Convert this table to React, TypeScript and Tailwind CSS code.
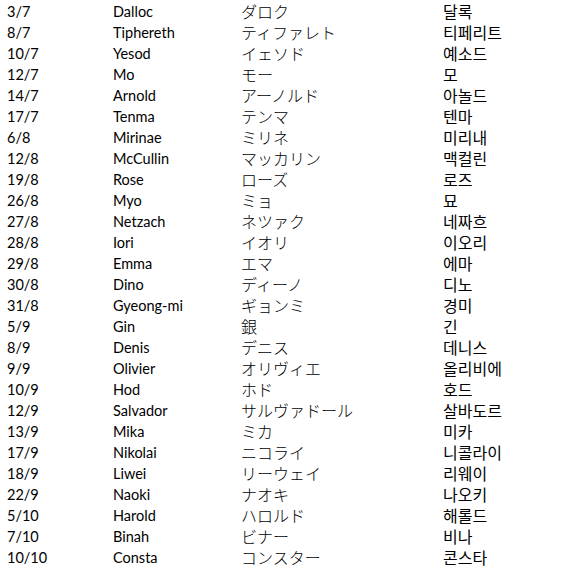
const rows: [string, string, string, string][] = [
  ["3/7", "Dalloc", "ダロク", "달록"],
  ["8/7", "Tiphereth", "ティファレト", "티페리트"],
  ["10/7", "Yesod", "イェソド", "예소드"],
  ["12/7", "Mo", "モー", "모"],
  ["14/7", "Arnold", "アーノルド", "아놀드"],
  ["17/7", "Tenma", "テンマ", "텐마"],
  ["6/8", "Mirinae", "ミリネ", "미리내"],
  ["12/8", "McCullin", "マッカリン", "맥컬린"],
  ["19/8", "Rose", "ローズ", "로즈"],
  ["26/8", "Myo", "ミョ", "묘"],
  ["27/8", "Netzach", "ネツァク", "네짜흐"],
  ["28/8", "Iori", "イオリ", "이오리"],
  ["29/8", "Emma", "エマ", "에마"],
  ["30/8", "Dino", "ディーノ", "디노"],
  ["31/8", "Gyeong-mi", "ギョンミ", "경미"],
  ["5/9", "Gin", "銀", "긴"],
  ["8/9", "Denis", "デニス", "데니스"],
  ["9/9", "Olivier", "オリヴィエ", "올리비에"],
  ["10/9", "Hod", "ホド", "호드"],
  ["12/9", "Salvador", "サルヴァドール", "살바도르"],
  ["13/9", "Mika", "ミカ", "미카"],
  ["17/9", "Nikolai", "ニコライ", "니콜라이"],
  ["18/9", "Liwei", "リーウェイ", "리웨이"],
  ["22/9", "Naoki", "ナオキ", "나오키"],
  ["5/10", "Harold", "ハロルド", "해롤드"],
  ["7/10", "Binah", "ビナー", "비나"],
  ["10/10", "Consta", "コンスター", "콘스타"],
  ["", "", "ギル", ""],
];

export default function App() {
  return (
    <div className="h-[571px] w-[574px] overflow-hidden bg-white pl-[7px] pt-px text-black">
      {rows.map(([date, name, jp, kr], i) => (
        <div key={i} className="grid h-[21px] grid-cols-[106px_128px_202px_1fr] items-center leading-[21px]">
          <span className="font-['Lato','Liberation_Sans',sans-serif] text-[14.5px]">{date}</span>
          <span className="font-['Lato','Liberation_Sans',sans-serif] text-[14.5px]">{name}</span>
          <span className="font-['Noto_Sans_CJK_JP',sans-serif] text-[16px] font-light">{jp}</span>
          <span className="font-['Noto_Sans_CJK_KR',sans-serif] text-[16px]">{kr}</span>
        </div>
      ))}
    </div>
  );
}
